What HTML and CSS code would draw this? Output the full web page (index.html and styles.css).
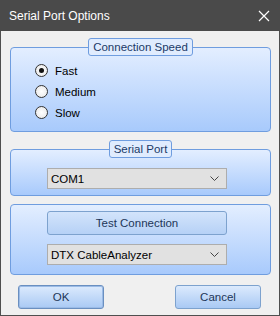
FILE: index.html
```html
<!DOCTYPE html>
<html lang="en">
<head>
  <meta charset="UTF-8">
  <title>Serial Port Options</title>
  <link rel="stylesheet" href="styles.css">
</head>
<body>
  <div class="window">
    <div class="titlebar">
      <span class="title">Serial Port Options</span>
      <svg class="close" width="12" height="12" viewBox="0 0 12 12">
        <path d="M1 1 L11 11 M11 1 L1 11" stroke="#fff" stroke-width="1.2" fill="none"/>
      </svg>
    </div>
    <div class="content">
      <div class="group group-speed">
        <div class="legend">Connection Speed</div>
        <div class="radios">
          <label class="radio checked"><span class="dot"></span>Fast</label>
          <label class="radio"><span class="dot"></span>Medium</label>
          <label class="radio"><span class="dot"></span>Slow</label>
        </div>
      </div>

      <div class="group group-port">
        <div class="legend">Serial Port</div>
        <div class="select">
          <span>COM1</span>
          <svg width="9" height="5" viewBox="0 0 9 5"><path d="M0.5 0.5 L4.5 4.5 L8.5 0.5" stroke="#444" fill="none"/></svg>
        </div>
      </div>

      <div class="group group-test">
        <button class="btn btn-test">Test Connection</button>
        <div class="select">
          <span>DTX CableAnalyzer</span>
          <svg width="9" height="5" viewBox="0 0 9 5"><path d="M0.5 0.5 L4.5 4.5 L8.5 0.5" stroke="#444" fill="none"/></svg>
        </div>
      </div>

      <div class="actions">
        <button class="btn btn-default">OK</button>
        <button class="btn">Cancel</button>
      </div>
    </div>
  </div>
</body>
</html>
```

FILE: styles.css
```css
* {
  box-sizing: border-box;
}

body {
  margin: 0;
  font-family: 'Liberation Sans', Arial, sans-serif;
  font-size: 11.5px;
  background: #f0f0f0;
}

.window {
  width: 280px;
  height: 316px;
  display: flex;
  flex-direction: column;
}

.titlebar {
  height: 31px;
  background: #4a4a4a;
  color: #fff;
  display: flex;
  align-items: center;
  justify-content: space-between;
  padding: 0 9px 0 9px;
}

.title {
  font-size: 12px;
  padding-top: 1px;
}

.close {
  margin-right: 1px;
}

.content {
  flex: 1;
  background: #f0f0f0;
  border: 1px solid #4f4f4f;
  border-top: none;
  padding: 16px 8px 0 9px;
  display: flex;
  flex-direction: column;
}

.group {
  border: 1px solid #6f9ddf;
  border-radius: 4px;
  background: linear-gradient(#e3eeff, #a8cafc);
  display: flex;
  flex-direction: column;
}

.legend {
  margin: -10px auto 0;
  height: 18px;
  padding: 0 4px;
  line-height: 16px;
  border: 1px solid #6f9ddf;
  border-radius: 3px;
  background: #e0ecfe;
  color: #1b3a68;
}

.group-speed {
  height: 85px;
}

.radios {
  padding: 4px 0 0 24px;
  display: flex;
  flex-direction: column;
}

.radio {
  height: 21px;
  display: flex;
  align-items: center;
  color: #000;
}

.dot {
  width: 13px;
  height: 13px;
  border: 1px solid #333;
  border-radius: 50%;
  background: radial-gradient(#fff, #e6e6e6);
  margin-right: 7px;
  display: flex;
  align-items: center;
  justify-content: center;
}

.radio.checked .dot::after {
  content: "";
  width: 5px;
  height: 5px;
  border-radius: 50%;
  background: #111;
}

.group-port {
  margin-top: 17px;
  height: 47px;
}

.select {
  width: 180px;
  height: 21px;
  margin-left: 36px;
  border: 1px solid #adadad;
  background: #e1e1e1;
  color: #000;
  display: flex;
  align-items: center;
  justify-content: space-between;
  padding: 0 7px 0 3px;
}

.group-port .select {
  margin-top: 10px;
}

.group-test {
  margin-top: 8px;
  height: 71px;
  padding-top: 6px;
}

.btn {
  font-family: inherit;
  font-size: 11.5px;
  height: 24px;
  width: 86px;
  border: 1px solid #7da2ce;
  border-radius: 3px;
  background: linear-gradient(#dceafd, #a9c9f4);
  color: #1d3658;
  padding: 0;
}

.btn-test {
  width: 180px;
  margin: 0 0 9px 36px;
  background: linear-gradient(#d3e4fb, #b6d1f6);
}

.btn-default {
  border-color: #6a8fc0;
  box-shadow: inset 0 0 0 1px #9bbbe6;
}

.actions {
  display: flex;
  justify-content: space-between;
  padding: 10px 10px 0 8px;
}
```
